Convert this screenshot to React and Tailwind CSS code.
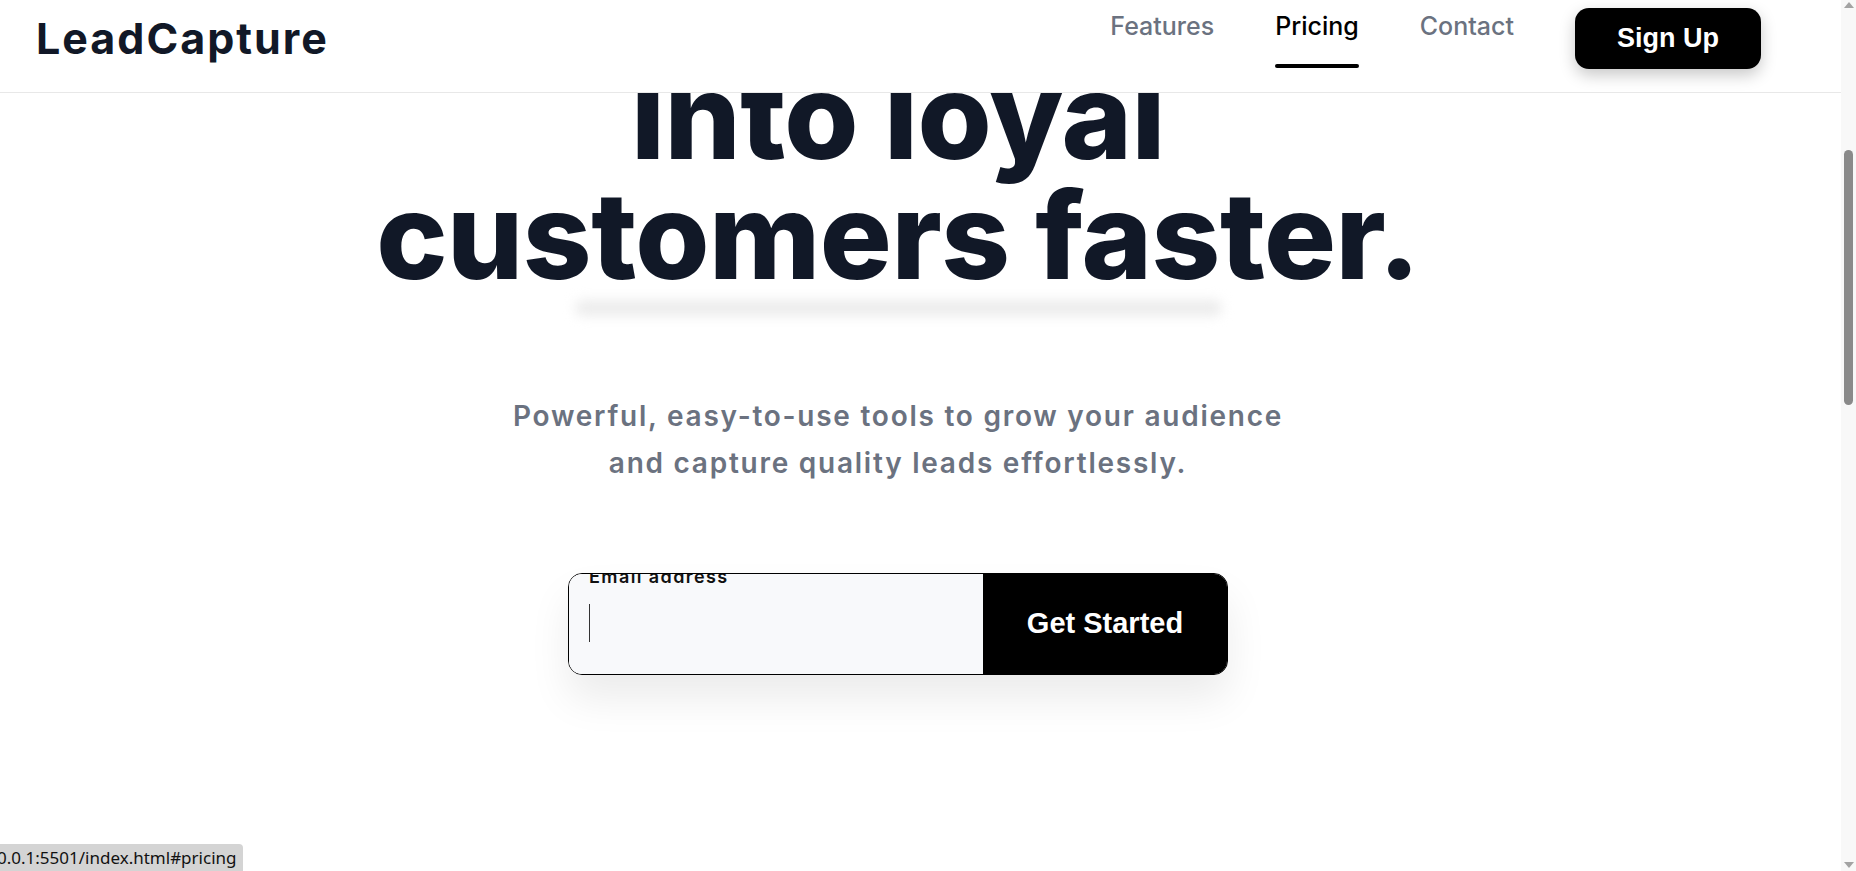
export default function App() {
  const sans = { fontFamily: "Inter, 'Noto Sans', sans-serif" };

  return (
    <div className="flex h-[871px] w-full overflow-hidden bg-white" style={sans}>
      {/* PAGE */}
      <div className="relative flex-1 overflow-hidden">
        {/* HEADER */}
        <header className="absolute inset-x-0 top-0 z-10 flex h-[93px] items-start justify-between border-b border-[#e8e8e8] bg-white pl-[36px] pr-[80px] pt-[8px]">
          <div className="flex h-[61px] items-center text-[43px] font-bold tracking-[2px] text-[#111827]">
            LeadCapture
          </div>

          <nav className="flex h-[61px] items-stretch gap-[61px]">
            <a href="#features" className="flex flex-col justify-between text-[25px] font-medium leading-[36px] text-[#6b7280]">
              Features
              <span className="h-[4px]" />
            </a>
            <a href="#pricing" className="flex flex-col justify-between text-[25px] font-medium leading-[36px] text-black">
              Pricing
              <span className="mb-[1px] h-[4px] rounded-full bg-black" />
            </a>
            <a href="#contact" className="flex flex-col justify-between text-[25px] font-medium leading-[36px] text-[#6b7280]">
              Contact
              <span className="h-[4px]" />
            </a>
            <button
              className="w-[186px] rounded-[14px] bg-black text-[27px] font-bold text-white shadow-[0_6px_16px_rgba(0,0,0,0.22)]"
              style={{ fontFamily: "'Liberation Sans', Arial, sans-serif" }}
            >
              Sign Up
            </button>
          </nav>
        </header>

        {/* HERO */}
        <main className="flex flex-col items-center pr-[45px] pt-[56px]">
          <h1 className="text-center text-[120px] font-extrabold leading-[120px] tracking-[-0.5px] text-[#111827]">
            <span className="block">into loyal</span>
            <span className="block">customers faster.</span>
          </h1>

          <div className="mt-[4px] h-[16px] w-[647px] rounded-full bg-[#ececec] blur-[6px]" />

          <p className="mt-[77px] text-center text-[28px] font-semibold leading-[47px] tracking-[1.75px] text-[#6b7280]">
            Powerful, easy-to-use tools to grow your audience
            <br />
            and capture quality leads effortlessly.
          </p>

          <form className="relative mt-[86px] flex h-[102px] w-[660px] overflow-hidden rounded-[14px] border border-black shadow-[0_24px_40px_rgba(0,0,0,0.08)]">
            <div className="relative flex-1 bg-[#f8f9fb]">
              <label className="absolute left-[20px] top-[-6px] text-[18px] font-semibold leading-none tracking-[1.4px] text-[#111]">
                Email address
              </label>
              <span className="absolute left-[20px] top-[30px] h-[38px] w-px bg-[#333]" />
            </div>
            <button
              type="button"
              className="w-[244px] bg-black text-[29px] font-bold text-white shadow-[-6px_0_12px_rgba(0,0,0,0.1)]"
              style={{ fontFamily: "'Liberation Sans', Arial, sans-serif" }}
            >
              Get Started
            </button>
          </form>
        </main>

        {/* STATUS BAR */}
        <div
          className="absolute bottom-0 left-0 z-20 flex h-[27px] w-[243px] items-center overflow-hidden rounded-tr-[4px] bg-[#d4d4d4] text-[17px] text-[#111]"
          style={{ fontFamily: "'Noto Sans', 'Open Sans', sans-serif" }}
        >
          <span className="-ml-[3px] whitespace-nowrap">0.0.1:5501/index.html#pricing</span>
        </div>
      </div>

      {/* SCROLLBAR */}
      <div className="flex w-[15px] flex-col items-center bg-[#f8f8f8]">
        <div className="mt-[2px] h-0 w-0 border-x-[5px] border-b-[6px] border-x-transparent border-b-[#a3a3a3]" />
        <div className="mt-[142px] h-[255px] w-[9px] rounded-full bg-[#8a8a8a]" />
        <div className="mt-auto mb-[3px] h-0 w-0 border-x-[5px] border-t-[6px] border-x-transparent border-t-[#a3a3a3]" />
      </div>
    </div>
  );
}
